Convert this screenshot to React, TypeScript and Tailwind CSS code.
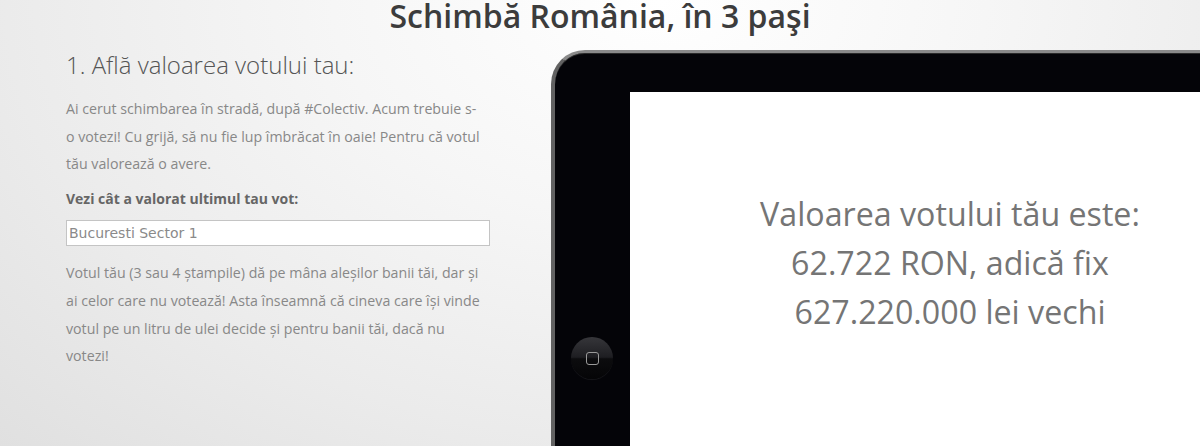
import React from "react";

export default function App() {
  return (
    <div
      className="relative h-[446px] w-[1200px] overflow-hidden bg-[radial-gradient(ellipse_at_55%_0%,#ffffff_0%,#f6f6f6_35%,#ebebeb_70%,#e0e0e0_100%)]"
      style={{ fontFamily: '"Open Sans", "Noto Sans", sans-serif' }}
    >
      <h1 className="h-[31px] pt-[1px] text-center text-[32px] font-semibold leading-[30px] text-[#3c3c3c]">
        Schimbă România, în 3 paşi
      </h1>
      <div className="flex">
        <div className="ml-[66px] w-[424px] shrink-0">
          <h2 className="mt-[21px] whitespace-nowrap text-[24px] font-light leading-[26px] text-[#555]">
            1. Află valoarea votului tau:
          </h2>
          <p className="mt-[17px] whitespace-nowrap text-[14.2px] leading-[27.5px] text-[#888]">
            Ai cerut schimbarea în stradă, după #Colectiv. Acum trebuie s-
            <br />
            o votezi! Cu grijă, să nu fie lup îmbrăcat în oaie! Pentru că votul
            <br />
            tău valorează o avere.
          </p>
          <p className="mt-[7px] text-[14px] font-bold leading-[27.5px] text-[#666]">
            Vezi cât a valorat ultimul tau vot:
          </p>
          <input
            readOnly
            value="Bucuresti Sector 1"
            className="mt-[8px] block h-[26px] w-[424px] border border-[#c4c4c4] bg-white px-[2px] text-[14px] text-[#8a8a8a] outline-none"
            style={{ fontFamily: '"DejaVu Sans", Verdana, sans-serif' }}
          />
          <p className="mt-[13px] whitespace-nowrap text-[14.2px] leading-[27.8px] text-[#888]">
            Votul tău (3 sau 4 ștampile) dă pe mâna aleșilor banii tăi, dar și
            <br />
            ai celor care nu votează! Asta înseamnă că cineva care își vinde
            <br />
            votul pe un litru de ulei decide și pentru banii tăi, dacă nu
            <br />
            votezi!
          </p>
        </div>
        <div className="ml-[61px] mt-[19px] shrink-0">
          <div className="relative w-[798px] rounded-tl-[34px] rounded-tr-[34px] border-l-[4px] border-t-[3px] border-l-[#626262] border-t-[#8a8a8a] bg-[#040408] pl-[75px] pt-[39px] shadow-[inset_0_1px_0_#2a2a2a]">
            <div className="h-[532px] w-[640px] bg-white pt-[97px] text-center text-[32.2px] leading-[49px] text-[#757575]">
              Valoarea votului tău este:
              <br />
              62.722 RON, adică fix
              <br />
              627.220.000 lei vechi
            </div>
            <div className="absolute left-[16px] top-[284px] flex h-[42px] w-[42px] items-center justify-center rounded-full bg-[linear-gradient(180deg,#36363a_0%,#1e1e22_48%,#0c0c0e_52%,#050507_100%)] shadow-[0_1px_1px_rgba(255,255,255,0.08)]">
              <div className="h-[13px] w-[13px] rounded-[3px] border-[1.5px] border-[#9a9a9a]" />
            </div>
          </div>
        </div>
      </div>
    </div>
  );
}
